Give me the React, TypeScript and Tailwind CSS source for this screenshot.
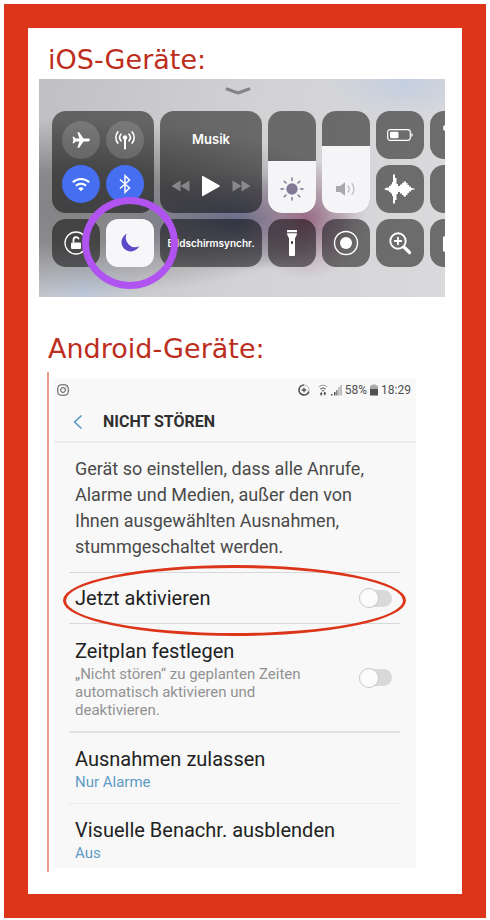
import React from "react";

const tile = "rounded-[14px] bg-black/50 text-white";

function Connectivity() {
  const circle = "flex size-[38px] items-center justify-center rounded-full";
  return (
    <div className={`${tile} col-span-2 row-span-2 grid grid-cols-[38px_38px] content-center justify-center gap-[6px]`}>
      <button aria-label="Flugmodus" className={`${circle} bg-white/15`}>
        <svg viewBox="0 0 20 20" className="size-5" fill="currentColor">
          <path d="M19 10c0-.9-1.1-1.4-2.2-1.4h-4.3L8.2 2.3H6.4l2 6.3H4.6L3 6.7H1.5L2.4 10l-.9 3.3H3l1.6-1.9h3.8l-2 6.3h1.8l4.3-6.3h4.3c1.1 0 2.2-.5 2.2-1.4z" />
        </svg>
      </button>
      <button aria-label="Mobile Daten" className={`${circle} bg-white/15`}>
        <svg viewBox="0 0 22 22" className="size-[22px]" fill="none" stroke="currentColor" strokeWidth="1.7" strokeLinecap="round">
          <circle cx="11" cy="8.500" r="2.300" fill="currentColor" stroke="none" />
          <path d="M11 9v10.500" strokeWidth="2" />
          <path d="M7 5.200a5 5 0 0 0 0 6.600M15 5.200a5 5 0 0 1 0 6.600M3.800 3a9 9 0 0 0 0 11M18.200 3a9 9 0 0 1 0 11" />
        </svg>
      </button>
      <button aria-label="WLAN" className={`${circle} bg-[#456ef0]`}>
        <svg viewBox="0 0 20 16" className="h-4 w-5" fill="none" stroke="currentColor" strokeWidth="2">
          <path d="M1.800 6.300a11.800 11.800 0 0 1 16.400 0M4.900 9.800a7.400 7.400 0 0 1 10.200 0" />
          <path d="M10 15.200l-2.700-2.700a4 4 0 0 1 5.400 0z" fill="currentColor" stroke="none" />
        </svg>
      </button>
      <button aria-label="Bluetooth" className={`${circle} bg-[#456ef0]`}>
        <svg viewBox="0 0 14 20" className="h-5 w-[14px]" fill="none" stroke="currentColor" strokeWidth="1.500">
          <path d="M2 5.500l9.500 8.500L7 18.300V1.700L11.500 6 2 14.500" />
        </svg>
      </button>
    </div>
  );
}

function Music() {
  return (
    <div className={`${tile} col-span-2 row-span-2 flex flex-col items-center justify-between pt-[18px] pb-[16px]`}>
      <span className="text-[13px] leading-5 font-semibold">Musik</span>
      <div className="flex items-center gap-[12px]">
        <button aria-label="Zurück" className="text-white/35">
          <svg viewBox="0 0 19 12" className="h-3 w-[19px]" fill="currentColor">
            <path d="M9.500 .5v11L.5 6zM18.500 .5v11l-9-5.500z" />
          </svg>
        </button>
        <button aria-label="Wiedergabe">
          <svg viewBox="0 0 18 22" className="h-[22px] w-[18px]" fill="currentColor">
            <path d="M0 1.500Q0 .3 1 .9l16.300 9.300q1 .8 0 1.500L1 21q-1 .6-1-.6z" />
          </svg>
        </button>
        <button aria-label="Weiter" className="text-white/35">
          <svg viewBox="0 0 19 12" className="h-3 w-[19px]" fill="currentColor">
            <path d="M.5 .5v11l9-5.500zM9.500 .5v11l9-5.500z" />
          </svg>
        </button>
      </div>
    </div>
  );
}

function VerticalSlider({ label, value, children }: { label: string; value: number; children: React.ReactNode }) {
  return (
    <label className={`${tile} relative row-span-2 flex flex-col justify-end overflow-hidden`}>
      <span className="flex items-end justify-center bg-[#f5f4f6] pb-[12px]" style={{ height: `${value}%` }}>
        {children}
      </span>
      <input type="range" aria-label={label} defaultValue={value} className="absolute inset-0 size-full opacity-0" />
    </label>
  );
}

function Tile({ label, children }: { label: string; children?: React.ReactNode }) {
  return (
    <button aria-label={label} className={`${tile} flex items-center justify-center`}>
      {children}
    </button>
  );
}

function ControlCenter() {
  return (
    <section className="mr-[17px] ml-[11px] overflow-hidden bg-[radial-gradient(ellipse_62px_60px_at_266px_140px,#9c6a86_0%,#a4788f88_40%,transparent_100%),radial-gradient(ellipse_120px_50px_at_195px_142px,#686b88_0%,#6c6f8877_50%,transparent_100%),radial-gradient(ellipse_290px_88px_at_30px_128px,#838386_0%,#8a8a8c_40%,transparent_100%),radial-gradient(ellipse_60px_40px_at_45px_210px,#bcc8da,transparent),radial-gradient(ellipse_80px_35px_at_365px_5px,#c4cfe0,transparent),linear-gradient(100deg,#c0c0c2_0%,#d2d2d4_50%,#dadadc_100%)] pb-[30px] font-['Inter','Liberation_Sans',sans-serif]">
      <div className="flex h-8 justify-center pt-[8px] pr-[8px]">
        <svg viewBox="0 0 26 8" className="h-2 w-[26px]" fill="none" stroke="#858587" strokeWidth="3" strokeLinecap="round" strokeLinejoin="round">
          <path d="M2 2l11 4 11-4" />
        </svg>
      </div>
      <div className="ml-[13px] grid auto-rows-[48px] grid-cols-[repeat(8,48px)] gap-[6px]">
        <Connectivity />
        <Music />
        <VerticalSlider label="Helligkeit" value={51}>
          <svg viewBox="0 0 24 24" className="size-6" fill="none" stroke="#817a96" strokeWidth="1.500" strokeLinecap="round">
            <circle cx="12" cy="12" r="5.700" fill="#817a96" stroke="none" />
            <path d="M12 1v2.500M12 20.500V23M1 12h2.500M20.500 12H23M4.200 4.200L6 6M18 18l1.800 1.800M4.200 19.800L6 18M18 6l1.800-1.800" />
          </svg>
        </VerticalSlider>
        <VerticalSlider label="Lautstärke" value={66}>
          <svg viewBox="0 0 20 24" className="h-6 w-5" fill="none" stroke="#b9b7ba" strokeWidth="1.200" strokeLinecap="round">
            <path d="M0 9.500Q0 9 .5 9H4l5-3.800v13.600L4 15H.5q-.5 0-.5-.5z" fill="#aaa7ab" stroke="none" />
            <path d="M12 9a4.500 4.500 0 0 1 0 6M16 6.500a9.500 9.500 0 0 1 0 11" />
          </svg>
        </VerticalSlider>
        <Tile label="Stromsparmodus">
          <svg viewBox="0 0 26 12" className="h-3 w-[26px]" fill="none" stroke="currentColor" strokeWidth="1.200">
            <rect x=".7" y=".7" width="22.600" height="10.600" rx="2.500" />
            <rect x="3" y="2.700" width="8.500" height="6.600" rx="1" fill="currentColor" stroke="none" />
            <path d="M24.300 4v4q1.400-.5 1.400-2t-1.400-2z" fill="currentColor" stroke="none" />
          </svg>
        </Tile>
        <Tile label="Wecker">
          <svg viewBox="0 0 48 48" className="size-12" fill="currentColor">
            <circle cx="16" cy="17" r="3" />
          </svg>
        </Tile>
        <Tile label="Sprachmemos">
          <svg viewBox="0 0 32 32" className="size-8" fill="currentColor">
            <path d="M0 16l3-1.500h2V13h1.500v-1.500H8V9h1V1.500h2V5h1.500v6H14v2h2v-1.500h2V10h1.500V8.500H22V10h1.500v2H25v1.500h2v1.200l4.500 1.300-4.500 1.300v1.200h-2V20h-1.500v2H22v1.500h-2.500V22H18v-1.500h-2V19h-2v2h-1.500v6H11v3.500H9V23H8v-2.500H6.500V19H5v-1.500H3z" />
          </svg>
        </Tile>
        <Tile label="Notizen" />
        <Tile label="Ausrichtungssperre">
          <svg viewBox="0 0 24 24" className="size-6" fill="none" stroke="currentColor" strokeWidth="1.300">
            <circle cx="12" cy="12" r="11" />
            <rect x="7" y="11.500" width="10" height="6.500" rx="1" fill="currentColor" stroke="none" />
            <path d="M9.500 11.500V8.800a2.700 2.700 0 0 1 5.300-.6" strokeWidth="1.800" />
          </svg>
        </Tile>
        <button aria-label="Nicht stören" className="relative z-10 flex items-center justify-center rounded-[12px] bg-[#f7f6f9]">
          <svg viewBox="0 0 20 20" className="size-5" fill="#5b4bc8">
            <path d="M6.800 .8A9.300 9.300 0 1 0 19.200 13.200 9.300 9.300 0 0 1 6.800 .8z" />
          </svg>
          <span className="pointer-events-none absolute -inset-x-[24px] -inset-y-[22px] rounded-[50%] border-[7px] border-[#b153f1]" />
        </button>
        <button className={`${tile} col-span-2 text-[10px] font-semibold`}>Bildschirmsynchr.</button>
        <Tile label="Taschenlampe">
          <svg viewBox="0 0 12 28" className="h-7 w-3" fill="currentColor">
            <path d="M1 1h10v2.200H1zM1 4.200h10c0 2.500-2 3.500-2 5.500V26q0 1-1 1H4q-1 0-1-1V9.700c0-2-2-3-2-5.500z" />
            <rect x="5" y="12" width="2" height="3" rx="1" fill="#41303c" />
          </svg>
        </Tile>
        <Tile label="Bildschirmaufnahme">
          <svg viewBox="0 0 26 26" className="size-[26px]" fill="none" stroke="currentColor" strokeWidth="1.400">
            <circle cx="13" cy="13" r="11.500" />
            <circle cx="13" cy="13" r="6" fill="currentColor" stroke="none" />
          </svg>
        </Tile>
        <Tile label="Lupe">
          <svg viewBox="0 0 24 24" className="size-6" fill="none" stroke="currentColor" strokeWidth="1.900" strokeLinecap="round">
            <circle cx="10" cy="10" r="7.700" />
            <path d="M10 6.700v6.600M6.700 10h6.600" />
            <path d="M16 16l5.500 5.500" strokeWidth="3.200" />
          </svg>
        </Tile>
        <Tile label="Kamera">
          <svg viewBox="0 0 48 48" className="size-12" fill="currentColor">
            <rect x="13" y="17" width="24" height="16" rx="2" />
          </svg>
        </Tile>
      </div>
    </section>
  );
}

function StatusBar() {
  return (
    <div className="flex h-[22px] items-center pr-[5px] pl-[3px] text-[12px] text-[#505050]">
      <svg viewBox="0 0 12 12" className="size-3" fill="none" stroke="currentColor">
        <rect x=".8" y=".8" width="10.400" height="10.400" rx="3" />
        <circle cx="6" cy="6" r="2.400" />
        <circle cx="9" cy="3" r=".6" fill="currentColor" stroke="none" />
      </svg>
      <div className="ml-auto flex items-center">
        <svg viewBox="0 0 12 12" className="mr-[8px] size-3" fill="none" stroke="currentColor">
          <path d="M6 1a5 5 0 1 0 4.800 6.500" strokeWidth="1.700" />
          <path d="M6 1a5 5 0 0 1 4.800 6.500" stroke="#b5b5b5" />
          <path d="M6 3.700v4.600M3.700 6h4.600" strokeWidth="1.300" />
        </svg>
        <svg viewBox="0 0 10 12" className="mr-[3px] h-3 w-[10px]" fill="none" stroke="currentColor">
          <path d="M.8 3a6.500 6.500 0 0 1 8.400 0" stroke="#999" />
          <path d="M2.300 5a4.200 4.200 0 0 1 5.400 0M3.800 7a2 2 0 0 1 2.400 0" />
          <path d="M3.200 8l1.500 2h-.8v1.500H2.500V10h-.8zM6.800 11.500L5.300 9.500h.8V8h1.400v1.500h.8z" fill="currentColor" stroke="none" />
        </svg>
        <svg viewBox="0 0 11 12" className="mr-[3px] h-3 w-[11px]" fill="currentColor">
          <path d="M0 10h1.500v1.500H0zM3 8h1.500v3.500H3z" />
          <path d="M5 6h1.700v5.500H5z" fill="#888" />
          <path d="M7.200 3h1.600v8.500H7.200zM9.200 1h1.800v10.500H9.200z" fill="#b8b8b8" />
        </svg>
        <span>58%</span>
        <svg viewBox="0 0 8 12" className="mx-[3px] h-3 w-2">
          <path d="M2.300 .5h3.400v1H8V5H0V1.500h2.300z" fill="#a8a8a8" />
          <path d="M0 5h8v6.500H0z" fill="#505050" />
        </svg>
        <span>18:29</span>
      </div>
    </div>
  );
}

function Toggle({ id }: { id: string }) {
  return (
    <label htmlFor={id} className="relative mr-[8px] flex h-5 w-[33px] shrink-0 items-center">
      <input id={id} type="checkbox" aria-labelledby={`${id}-titel`} className="peer sr-only" />
      <span className="ml-[2px] h-[17px] flex-1 rounded-full bg-[#d9d9d9]" />
      <span className="absolute left-0 size-5 rounded-full border border-[#c6c6c6] bg-[#fbfbfb] peer-checked:left-[13px]" />
    </label>
  );
}

function DoNotDisturb() {
  const title = "text-[20px] leading-6 text-[#222]";
  return (
    <section className="mr-[46px] ml-[19px] border-l-2 border-l-[#ee9a92] pt-[7px] pb-1 pl-[5px] font-['Roboto','Liberation_Sans',sans-serif]">
      <div className="bg-[#f8f8f8] pb-1">
        <StatusBar />
        <header className="flex h-[42px] items-center border-b-2 border-[#ececec] pt-[2px] pl-[19px]">
          <button aria-label="Zurück">
            <svg viewBox="0 0 10 16" className="h-4 w-[10px]" fill="none" stroke="#4b93c4" strokeWidth="1.400">
              <path d="M8.500 1.500L1.500 8l7 6.500" />
            </svg>
          </button>
          <h2 className="ml-5 text-[16px] leading-6 font-bold text-[#303030]">NICHT STÖREN</h2>
        </header>
        <div className="mr-4 ml-[15px]">
          <p className="pt-[13px] pb-[12px] pl-[6px] text-[18px] leading-[26px] text-[#4a4a4a]">
            Gerät so einstellen, dass alle Anrufe,
            <br />
            Alarme und Medien, außer den von
            <br />
            Ihnen ausgewählten Ausnahmen,
            <br />
            stummgeschaltet werden.
          </p>
          <div className="relative flex h-[52px] items-center justify-between border-y border-[#d8d8d8] pl-[6px]">
            <span id="jetzt-titel" className={title}>Jetzt aktivieren</span>
            <Toggle id="jetzt" />
            <span className="pointer-events-none absolute -inset-x-[6px] -top-[8px] -bottom-[13px] rounded-[50%] border-[3px] border-[#dc3519]" />
          </div>
          <div className="flex h-[109px] items-center justify-between border-b-2 border-[#e2e2e2] pl-[6px]">
            <div className="pt-[2px]">
              <h3 id="zeitplan-titel" className={title}>Zeitplan festlegen</h3>
              <p className="pt-[2px] text-[15px] leading-[18px] text-[#929292]">
                „Nicht stören“ zu geplanten Zeiten
                <br />
                automatisch aktivieren und
                <br />
                deaktivieren.
              </p>
            </div>
            <Toggle id="zeitplan" />
          </div>
          <button className="flex h-[71px] w-full flex-col justify-center border-b border-[#ececec] pt-1 pl-[6px] text-left">
            <span className={title}>Ausnahmen zulassen</span>
            <span className="text-[15px] leading-[22px] text-[#5f9bc5]">Nur Alarme</span>
          </button>
          <button className="flex w-full flex-col pt-[14px] pl-[6px] text-left">
            <span className={title}>Visuelle Benachr. ausblenden</span>
            <span className="text-[15px] leading-[22px] text-[#5f9bc5]">Aus</span>
          </button>
        </div>
      </div>
    </section>
  );
}

export default function App() {
  const heading = "pl-[20px] text-[27px] leading-8 text-[#bd2d1c] font-['DejaVu_Sans','Liberation_Sans',sans-serif]";
  return (
    <div className="bg-white px-1 pt-1 pb-[2px]">
      <main className="border-24 border-[#dc3519] pb-[22px]">
        <h1 className={`${heading} pt-4 pb-[3px]`}>iOS-Geräte:</h1>
        <ControlCenter />
        <h1 className={`${heading} pt-[36px] pb-[7px]`}>Android-Geräte:</h1>
        <DoNotDisturb />
      </main>
    </div>
  );
}
